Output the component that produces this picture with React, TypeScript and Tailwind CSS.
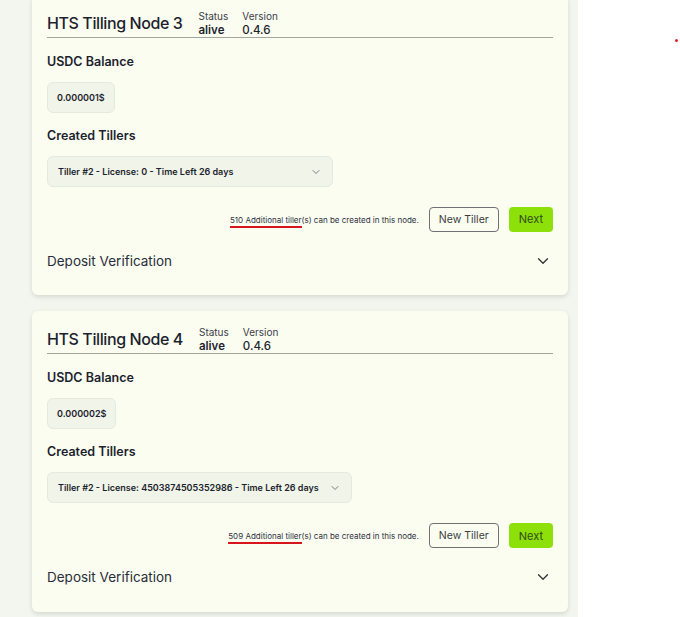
import { ChevronDown } from "lucide-react";

interface NodeInfo {
  name: string;
  status: string;
  version: string;
  balance: string;
  tiller: string;
  remaining: number;
}

const nodes: NodeInfo[] = [
  {
    name: "HTS Tilling Node 3",
    status: "alive",
    version: "0.4.6",
    balance: "0.000001$",
    tiller: "Tiller #2 - License: 0 - Time Left 26 days",
    remaining: 510,
  },
  {
    name: "HTS Tilling Node 4",
    status: "alive",
    version: "0.4.6",
    balance: "0.000002$",
    tiller: "Tiller #2 - License: 4503874505352986 - Time Left 26 days",
    remaining: 509,
  },
];

function NodeCard({ node }: { node: NodeInfo }) {
  return (
    <div className="bg-[#fbfdf1] rounded-md shadow-[0_2px_5px_rgba(0,0,0,0.12)] px-[15px] pt-[14px] pb-[24px]">
      {/* Header */}
      <div className="flex items-end gap-[16px] border-b-[1.5px] border-[#a3a69c] pb-[1px]">
        <h2 className="text-[16px] font-medium leading-[26px] text-[#1c1f2e] tracking-[-0.4px]">
          {node.name}
        </h2>
        <div className="flex gap-[14px] -mb-[1px]">
          <div className="flex flex-col">
            <span className="text-[10px] leading-[14px] text-[#3a3d48]">Status</span>
            <span className="text-[11.5px] leading-[14px] font-semibold text-[#1c1f2e]">
              {node.status}
            </span>
          </div>
          <div className="flex flex-col">
            <span className="text-[10px] leading-[14px] text-[#3a3d48]">Version</span>
            <span className="text-[11.5px] leading-[14px] font-medium text-[#1c1f2e]">
              {node.version}
            </span>
          </div>
        </div>
      </div>

      {/* Balance */}
      <div className="mt-[16px] text-[12.5px] font-semibold text-[#1c1f2e] leading-[16px]">
        USDC Balance
      </div>
      <div className="mt-[12px] inline-flex items-center h-[31px] px-[9px] rounded-md bg-[#f1f4e9] border border-[#e6e9de] text-[9px] font-semibold text-[#1c1f2e]">
        {node.balance}
      </div>

      {/* Tillers */}
      <div className="mt-[15px] text-[12.5px] font-semibold text-[#1c1f2e] leading-[16px]">
        Created Tillers
      </div>
      <div className="mt-[12px] inline-flex items-center gap-[10px] h-[31px] min-w-[286px] justify-between pl-[10px] pr-[10px] rounded-md bg-[#f1f4e9] border border-[#e6e9de]">
        <span className="text-[9px] font-semibold text-[#1c1f2e] whitespace-nowrap">
          {node.tiller}
        </span>
        <ChevronDown className="w-[12px] h-[12px] text-[#555]" strokeWidth={1.5} />
      </div>

      {/* Actions */}
      <div className="mt-[20px] flex items-center justify-end gap-[10px]">
        <span className="text-[8px] text-[#2d3040] whitespace-nowrap">
          <span className="border-b-[2.5px] border-[#d8141c] pb-[1px]">
            {node.remaining} Additional tiller
          </span>
          (s) can be created in this node.
        </span>
        <button className="h-[25px] px-[9px] rounded-[4px] border border-[#6f7173] text-[10.5px] text-[#3a3c40] bg-transparent">
          New Tiller
        </button>
        <button className="h-[25px] px-[10px] rounded-[4px] bg-[#8ee00a] text-[11px] text-[#2e4a17]">
          Next
        </button>
      </div>

      {/* Deposit Verification */}
      <div className="mt-[19px] flex items-center justify-between pr-[1px]">
        <span className="text-[13.5px] text-[#2a2d3a]">Deposit Verification</span>
        <ChevronDown className="w-[18px] h-[18px] text-[#333]" strokeWidth={1.75} />
      </div>
    </div>
  );
}

export default function App() {
  return (
    <div
      className="relative w-[680px] h-[617px] overflow-hidden bg-white"
      style={{ fontFamily: "Inter, 'Noto Sans', sans-serif" }}
    >
      <div className="w-[578px] h-full flex flex-col bg-[#f2f6ee] pl-[32px] pr-[10px]">
        <div className="-mt-[5px] flex flex-col gap-[16px]">
          {nodes.map((n) => (
            <NodeCard key={n.name} node={n} />
          ))}
        </div>
      </div>
      <div className="absolute left-[675px] top-[39px] w-[3px] h-[3px] rounded-full bg-[#e0202a] rotate-45" />
    </div>
  );
}
